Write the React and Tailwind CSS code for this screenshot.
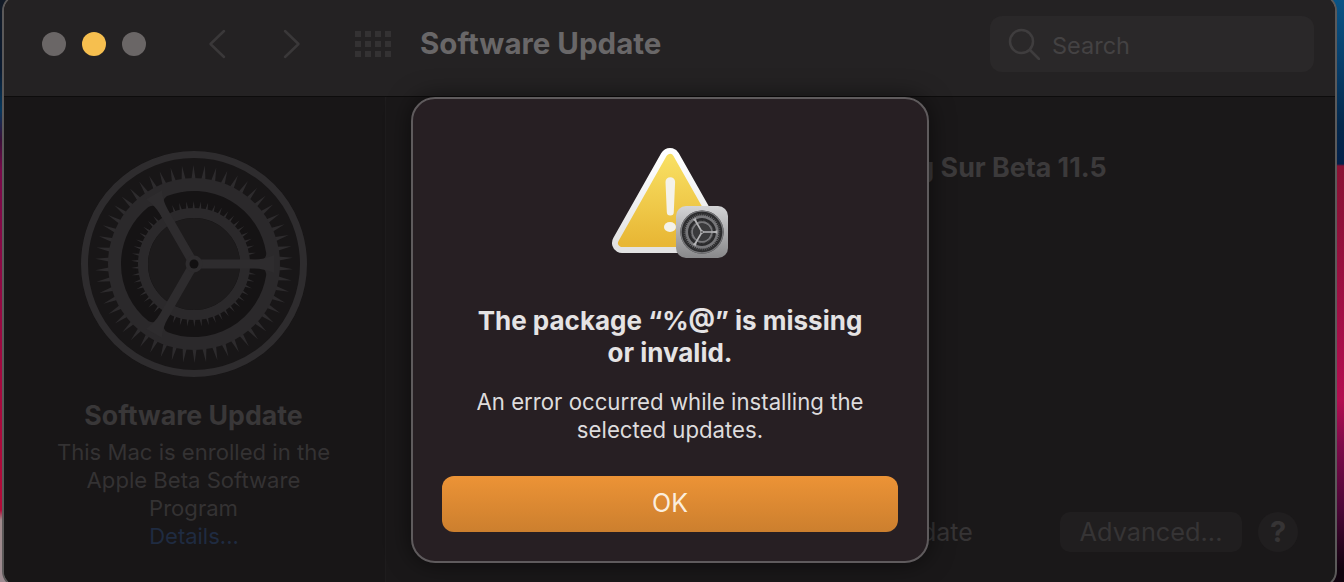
const P = (r, deg) => {
  const a = (deg * Math.PI) / 180;
  return `${(r * Math.cos(a)).toFixed(2)} ${(r * Math.sin(a)).toFixed(2)}`;
};

function teeth(n, r0, r1, halfDeg) {
  let d = "";
  for (let i = 0; i < n; i++) {
    const t = (i * 360) / n + 3;
    d += `M${P(r0, t - halfDeg)}L${P(r1, t)}L${P(r0, t + halfDeg)}Z`;
  }
  return d;
}

function windowPath(start) {
  const a = start + 9;
  const b = start + 111;
  return `M${P(17, start + 60)}L${P(66, a)}A66 66 0 0 1 ${P(66, b)}Z`;
}

function Gear({ c }) {
  return (
    <g>
      <circle r="113" fill={c.base} />
      <circle r="109.5" fill="none" stroke={c.ring} strokeWidth="7" />
      <path d={teeth(54, 84, 99, 1.5)} fill={c.tooth} />
      <circle r="86" fill={c.gear} />
      {[0, 120, 240].map((s) => (
        <path key={s} d={windowPath(s)} fill={c.win} stroke={c.win} strokeWidth="14" strokeLinejoin="round" />
      ))}
      <path d={teeth(54, 54, 63, 1.4)} fill={c.tooth} />
      <circle r="51" fill="none" stroke={c.gear} strokeWidth="10" />
      <circle r="46" fill={c.disc} />
      {[0, 120, 240].map((s) => (
        <path
          key={s}
          transform={`rotate(${s})`}
          d="M0 -4.500L60 -4.500Q70 -4.500 80 -9L80 9Q70 4.500 60 4.500L0 4.500Z"
          fill={c.spoke}
        />
      ))}
      <circle r="8.5" fill={c.spoke} />
      <circle r="4.5" fill={c.hub} />
    </g>
  );
}

const darkGear = {
  base: "#181617",
  ring: "#2e2c2e",
  tooth: "#2d2b2d",
  gear: "#2b292b",
  win: "#151314",
  disc: "#1d1b1c",
  spoke: "#2e2c2e",
  hub: "#121011",
};

const miniGear = {
  base: "#2c2c2e",
  ring: "#77777a",
  tooth: "#8b8b8e",
  gear: "#77777a",
  win: "#2a2a2c",
  disc: "#3a3a3c",
  spoke: "#b4b4b6",
  hub: "#2a2a2c",
};

function AlertIcon() {
  return (
    <svg width="120" height="114" viewBox="610 146 120 114" className="block">
      <defs>
        <linearGradient id="yel" x1="0" y1="0" x2="0" y2="1">
          <stop offset="0" stopColor="#f8df62" />
          <stop offset="1" stopColor="#e8b735" />
        </linearGradient>
        <linearGradient id="sq" x1="0" y1="0" x2="0" y2="1">
          <stop offset="0" stopColor="#d4d4d6" />
          <stop offset="1" stopColor="#88888a" />
        </linearGradient>
        <linearGradient id="edge" x1="0" y1="0" x2="0" y2="1">
          <stop offset="0" stopColor="#ffffff" />
          <stop offset="1" stopColor="#e2e2e2" />
        </linearGradient>
      </defs>
      <polygon points="670,158 622,243 718,243" fill="url(#edge)" stroke="url(#edge)" strokeWidth="20" strokeLinejoin="round" />
      <polygon points="670,158 622,243 718,243" fill="url(#yel)" stroke="url(#yel)" strokeWidth="8" strokeLinejoin="round" />
      <path d="M665.500 182a4.800 4.800 0 0 1 9.600 0L673.800 212a3.500 3.500 0 0 1 -7 0Z" fill="#f4f2ea" />
      <ellipse cx="670" cy="227" rx="6" ry="5" fill="#f4f2ea" />
      <rect x="676" y="206" width="52" height="52" rx="10" fill="url(#sq)" />
      <svg x="680" y="210" width="44" height="44" viewBox="-115 -115 230 230">
        <Gear c={miniGear} />
      </svg>
    </svg>
  );
}

function SearchIcon() {
  return (
    <svg width="32" height="32" viewBox="0 0 32 32" fill="none" stroke="#3f3d3e" strokeWidth="2.500" strokeLinecap="round">
      <circle cx="13.500" cy="13.500" r="11.500" />
      <path d="M22 22L31 31" />
    </svg>
  );
}

export default function App() {
  const font = "font-['Inter','Liberation_Sans',sans-serif]";
  return (
    <div className={`relative w-[1344px] h-[582px] overflow-hidden ${font}`}>
      <div className="absolute inset-0 flex">
        <div className="w-1/2 h-full bg-[linear-gradient(180deg,#121a26_0px,#0a1a30_70px,#06375c_110px,#3a1038_140px,#78094a_170px,#a5083f_380px,#b30a38_510px,#a08a8c_520px,#9c8a90_582px)]" />
        <div className="w-1/2 h-full bg-[linear-gradient(180deg,#0a5486_0px,#073c68_70px,#04284c_125px,#03204a_164px,#8a1234_166px,#8e1139_220px,#b30d50_400px,#7e0a4a_445px,#4a0636_510px,#10030e_570px)]" />
      </div>

      <div className="relative ml-[2px] mr-[7px] mt-[-6px] h-[594px] rounded-[17px] border-2 border-[#5b5959] bg-[#1a1819] overflow-hidden flex flex-col">
        <div className="h-[101px] shrink-0 bg-[#242223] border-b border-[#0d0c0c] flex items-center pl-[38px] pr-[21px] pt-[6px] pb-[10px]">
          <div className="flex gap-[16px]">
            <div className="w-[24px] h-[24px] rounded-full bg-[#6a6666]" />
            <div className="w-[24px] h-[24px] rounded-full bg-[#f6bf4f]" />
            <div className="w-[24px] h-[24px] rounded-full bg-[#6a6666]" />
          </div>
          <svg width="18" height="30" viewBox="0 0 18 30" fill="none" stroke="#3a3839" strokeWidth="2.500" strokeLinecap="round" strokeLinejoin="round" className="ml-[62px]">
            <path d="M16 2L2.500 15L16 28" />
          </svg>
          <svg width="18" height="30" viewBox="0 0 18 30" fill="none" stroke="#3a3839" strokeWidth="2.500" strokeLinecap="round" strokeLinejoin="round" className="ml-[57px]">
            <path d="M2 2L15.500 15L2 28" />
          </svg>
          <div className="ml-[54px] grid grid-cols-4 gap-[4px]">
            {Array.from({ length: 12 }).map((_, i) => (
              <div key={i} className="w-[6px] h-[6px] bg-[#343233]" />
            ))}
          </div>
          <div className="ml-[29px] mb-[2px] text-[29.500px] leading-[36px] font-bold text-[#696768]">Software Update</div>
          <div className="ml-auto w-[324px] h-[56px] rounded-[12px] bg-[#2a2829] flex items-center pl-[18px] gap-[12px]">
            <SearchIcon />
            <span className="text-[23.500px] text-[#444243] pt-[4px]">Search</span>
          </div>
        </div>

        <div className="flex-1 flex min-h-0">
          <div className="w-[382px] shrink-0 border-r border-[#1e1c1d] bg-[#181617] flex flex-col items-center pt-[53px] pr-[2px]">
            <svg width="228" height="228" viewBox="-114 -114 228 228" className="block">
              <Gear c={darkGear} />
            </svg>
            <div className="mt-[20px] text-[26.700px] leading-[34px] font-bold text-[#393738]">Software Update</div>
            <div className="mt-[6px] text-[22.100px] leading-[28px] text-[#343233] text-center w-[300px]">
              This Mac is enrolled in the Apple Beta Software Program
            </div>
            <div className="text-[22px] leading-[28px] text-[#1f2b41] pl-[1px]">Details...</div>
          </div>

          <div className="flex-1 flex flex-col pt-[53px] pb-[34px] pr-[37px] min-w-0">
            <div className="text-[26.800px] leading-[34px] font-bold text-[#3c3a3b] ml-[406px] whitespace-nowrap">macOS Big Sur Beta 11.5</div>
            <div className="mt-auto flex items-center">
              <div className="text-[25px] leading-[40px] text-[#363435] ml-[535px] whitespace-nowrap">date</div>
              <div className="ml-auto w-[182px] h-[40px] rounded-[10px] bg-[#201e1f] flex items-center justify-center text-[25.300px] text-[#363435]">Advanced...</div>
              <div className="ml-[16px] w-[40px] h-[40px] rounded-full bg-[#201e1f] flex items-center justify-center text-[29px] font-bold text-[#363435]">?</div>
            </div>
          </div>
        </div>
      </div>

      <div className="absolute left-[411px] top-[97px] w-[518px] h-[466px] rounded-[24px] border-2 border-[#5f5b5d] bg-[#271f23] shadow-[0_0_24px_rgba(0,0,0,0.55)] flex flex-col items-center pt-[47px]">
        <AlertIcon />
        <div className="mt-[45px] w-[400px] text-center text-[26px] leading-[32px] font-bold text-[#e5e3e4]">
          The package “%@” is missing or invalid.
        </div>
        <div className="mt-[19px] w-[430px] text-center text-[22.200px] leading-[28px] text-[#dedcdd]">
          An error occurred while installing the selected updates.
        </div>
        <div className="mt-[32px] w-[456px] h-[56px] rounded-[12px] bg-[linear-gradient(180deg,#ec9336,#cc7f2e)] flex items-center justify-center text-[25px] text-[#fbeede]">
          OK
        </div>
      </div>
    </div>
  );
}
